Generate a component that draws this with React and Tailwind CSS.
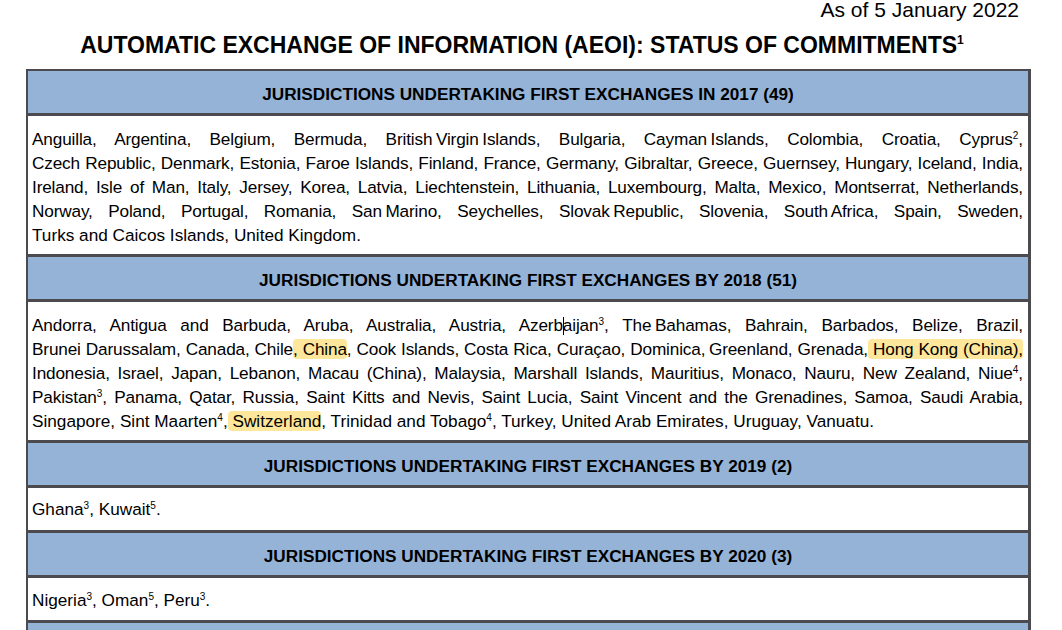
import React from 'react';

const font = { fontFamily: '"Liberation Sans", Arial, sans-serif' };

function Sup({ n }) {
  return <span className="relative -top-[6px] text-[10px] leading-none tracking-normal">{n}</span>;
}

function Hl({ children }) {
  return <span className="bg-[#fee69a] rounded-[4px]">{children}</span>;
}

function Keep({ children }) {
  return <span className="inline-block">{children}</span>;
}

function Line({ children, last }) {
  return (
    <div
      className={
        'whitespace-nowrap ' +
        (last
          ? 'text-left'
          : 'text-justify [text-align-last:justify] tracking-[-0.15px] [word-spacing:-1px]')
      }
    >
      {children}
    </div>
  );
}

function Header({ children }) {
  return (
    <div className="h-[45px] bg-[#95b3d7] border-b-[3px] border-[#4b4b4f] flex items-center justify-center pt-[4px]">
      <span className="font-bold text-[17.2px] leading-[20px] text-black">{children}</span>
    </div>
  );
}

function Body({ children, tall }) {
  return (
    <div
      className={
        'bg-white border-b-[3px] border-[#4b4b4f] pl-[4px] pr-[5px] text-[17.2px] leading-[24px] text-black ' +
        (tall ? 'pt-[11px] pb-[7px]' : 'h-[45px] flex flex-col justify-center')
      }
    >
      {children}
    </div>
  );
}

export default function App() {
  return (
    <div className="w-[1062px] h-[630px] overflow-hidden bg-white" style={font}>
      <div className="flex justify-end pr-[43px] -mt-[2px] h-[24px]">
        <span className="text-[21px] leading-[24px] text-black">As of 5 January 2022</span>
      </div>
      <div className="flex justify-center pt-[10px] pr-[18px] h-[47px]">
        <h1 className="font-bold text-[23px] leading-[26px] text-black">
          AUTOMATIC EXCHANGE OF INFORMATION (AEOI): STATUS OF COMMITMENTS
          <span className="relative -top-[9px] text-[12px]">1</span>
        </h1>
      </div>

      <div className="ml-[26px] w-[1005px] border-t-2 border-l-2 border-r-[3px] border-[#4b4b4f]">
        <Header>JURISDICTIONS UNDERTAKING FIRST EXCHANGES IN 2017 (49)</Header>
        <Body tall>
          <Line>
            Anguilla, Argentina, Belgium, Bermuda, <Keep>British Virgin Islands</Keep>, Bulgaria, <Keep>Cayman Islands</Keep>, Colombia, Croatia, Cyprus<Sup n="2" />,
          </Line>
          <Line>
            Czech Republic, Denmark, Estonia, Faroe Islands, Finland, France, Germany, Gibraltar, Greece, Guernsey, Hungary, Iceland, India,
          </Line>
          <Line>
            Ireland, Isle of Man, Italy, Jersey, Korea, Latvia, Liechtenstein, Lithuania, Luxembourg, Malta, Mexico, Montserrat, Netherlands,
          </Line>
          <Line>
            Norway, Poland, Portugal, Romania, <Keep>San Marino</Keep>, Seychelles, <Keep>Slovak Republic</Keep>, Slovenia, <Keep>South Africa</Keep>, Spain, Sweden,
          </Line>
          <Line last>Turks and Caicos Islands, United Kingdom.</Line>
        </Body>

        <Header>JURISDICTIONS UNDERTAKING FIRST EXCHANGES BY 2018 (51)</Header>
        <Body tall>
          <Line>
            Andorra, Antigua and Barbuda, Aruba, Australia, Austria, Azerb
            <span className="inline-block w-px h-[18px] bg-black align-[-4px] -mr-px" />
            aijan<Sup n="3" />, <Keep>The Bahamas</Keep>, Bahrain, Barbados, Belize, Brazil,
          </Line>
          <Line>
            Brunei Darussalam, Canada, Chile<Hl>, China</Hl>, Cook Islands, Costa Rica, Curaçao, <Keep>Dominica, Greenland</Keep>, Grenada,<Hl> Hong Kong (China),</Hl>
          </Line>
          <Line>
            Indonesia, Israel, Japan, Lebanon, Macau (China), Malaysia, Marshall Islands, Mauritius, Monaco, Nauru, New Zealand, Niue<Sup n="4" />,
          </Line>
          <Line>
            Pakistan<Sup n="3" />, Panama, Qatar, Russia, Saint Kitts and Nevis, Saint Lucia, Saint Vincent and the Grenadines, Samoa, Saudi Arabia,
          </Line>
          <Line last>
            Singapore, Sint Maarten<Sup n="4" />,<Hl> Switzerland</Hl>, Trinidad and Tobago<Sup n="4" />, Turkey, United Arab Emirates, Uruguay, Vanuatu.
          </Line>
        </Body>

        <Header>JURISDICTIONS UNDERTAKING FIRST EXCHANGES BY 2019 (2)</Header>
        <Body>
          <div>
            Ghana<Sup n="3" />, Kuwait<Sup n="5" />.
          </div>
        </Body>

        <Header>JURISDICTIONS UNDERTAKING FIRST EXCHANGES BY 2020 (3)</Header>
        <Body>
          <div className="pt-[2px]">
            Nigeria<Sup n="3" />, Oman<Sup n="5" />, Peru<Sup n="3" />.
          </div>
        </Body>

        <div className="h-[42px] bg-[#95b3d7]" />
      </div>
    </div>
  );
}
